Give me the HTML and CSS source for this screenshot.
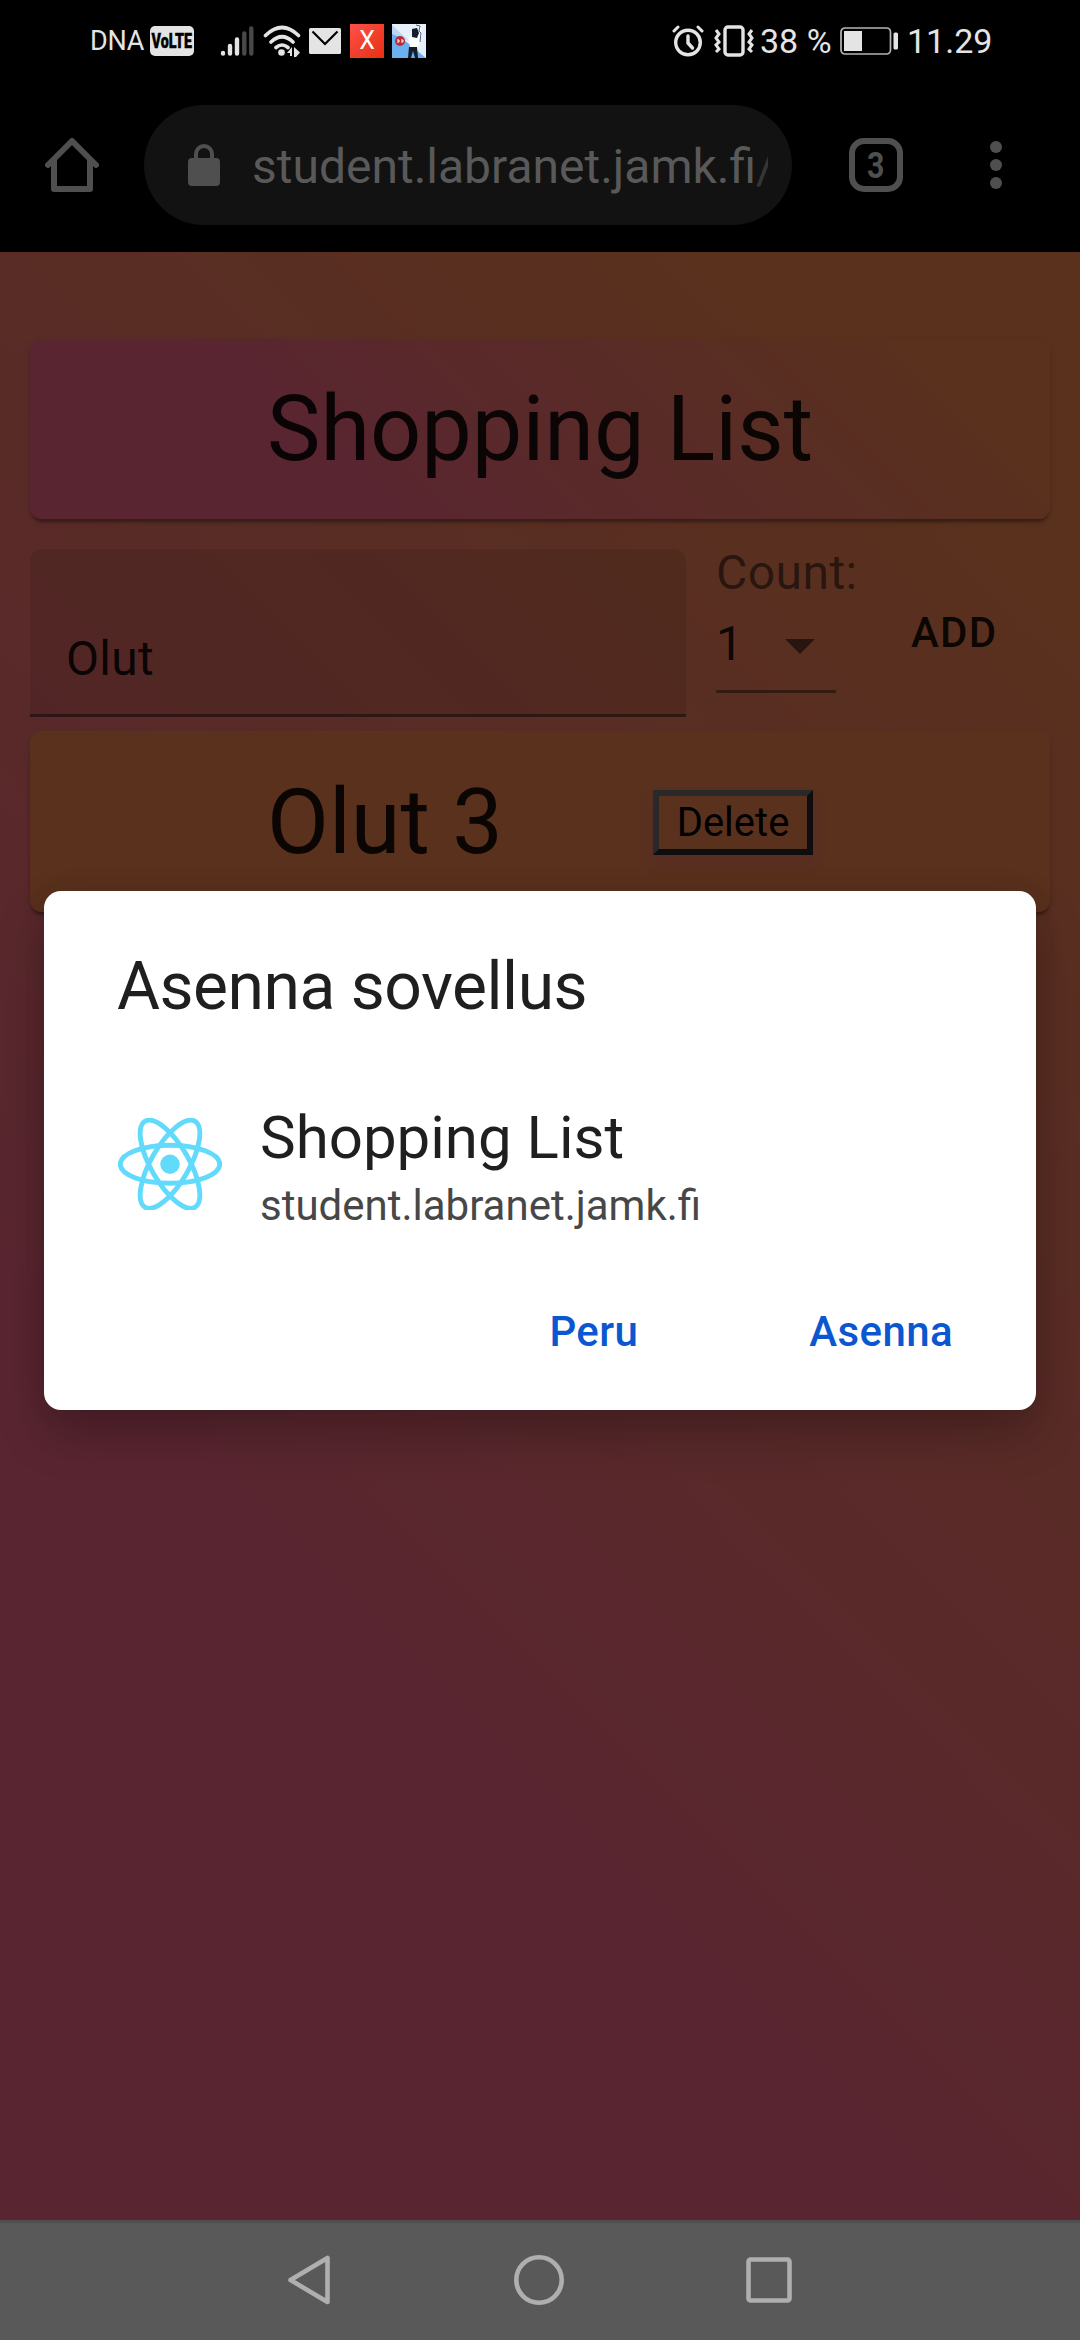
FILE: index.html
```html
<!DOCTYPE html>
<html lang="fi">
<head>
<meta charset="utf-8">
<title>Shopping List</title>
<link rel="stylesheet" href="styles.css">
</head>
<body>
<header class="status">
  <div class="status-left">
    <span class="carrier">DNA</span>
    <span class="volte"><span class="volte-text">VoLTE</span></span>
    <svg class="signal" width="34" height="32" viewBox="0 0 34 32"><g stroke="#e4e4e4" stroke-width="4.4" stroke-linecap="round"><path d="M3 28v.6M10 21v7.6M17 14.5v14.1"/><path stroke="#484848" d="M24.3 8.500v20.100M31.300 3.500v25.100"/></g></svg>
    <svg class="wifi" width="38" height="32" viewBox="0 0 38 32"><g fill="none" stroke="#e4e4e4" stroke-width="3.600" stroke-linecap="round"><path d="M2.500 10.500Q19-5.500 35.500 10.500M8 17Q19 6.500 30 17M13 22.500Q19 17.500 25 22.500"/></g><circle cx="18.500" cy="27.500" r="3.300" fill="#e4e4e4"/><path fill="#e4e4e4" d="M24 28l5-6v9h-2v-3zM31 22l6 5.500-4 4.500h-2z"/></svg>
    <svg class="mail" width="32" height="26" viewBox="0 0 32 26"><rect width="32" height="26" rx="1.500" fill="#e4e4e4"/><path d="M3.500 3.500L16 16 28.500 3.500" fill="none" stroke="#000" stroke-width="2.200"/></svg>
    <span class="app-x">X</span>
    <svg class="avatar" width="34" height="34" viewBox="0 0 34 34"><path fill="#e6f0fb" d="M0 0h34v34H0z"/><path fill="#6cb1ef" d="M0 6L34 34H0z"/><path fill="#b9d7f5" d="M0 1L17 17 0 10z"/><path fill="#fff" d="M17 13l8-3 4-7 1 9-4 12-8-1z"/><path fill="#151c2c" d="M20 5l5-1 2 5-2 5-5-1zM17 23h8l1 11h-3l-2-7-2 7h-3z"/><path fill="none" stroke="#566178" d="M24 1l4 1-1 5 2 2-1 9"/><circle cx="8" cy="17" r="5" fill="#bd2c35"/><path fill="none" stroke="#fff" d="M5 16h2v2H5M9 16h2v2H9"/></svg>
  </div>
  <div class="status-right">
    <svg width="32" height="32" viewBox="0 0 32 32" fill="none" stroke="#e4e4e4" stroke-linecap="round"><circle cx="16" cy="17.500" r="12.300" stroke-width="3.400"/><path stroke-width="3.400" d="M16 11v7l4.500 5"/><path stroke-width="3" d="M2 6l4-4M30 6l-4-4"/></svg>
    <svg class="vibrate" width="40" height="32" viewBox="0 0 40 32" fill="none" stroke="#e4e4e4" stroke-width="3.400"><rect x="11" y="2" width="18" height="28" rx="3"/><path stroke-width="3" d="M2 5l3 4-3 4 3 4-3 3 3 4-3 3M38 5l-3 4 3 4-3 4 3 3-3 4 3 3"/></svg>
    <span class="level">38 %</span>
    <svg class="battery" width="59" height="28" viewBox="0 0 59 28"><rect x="1" y="1" width="49.500" height="26" rx="4" fill="none" stroke="#b5b5b5" stroke-width="1.700"/><rect x="4" y="4" width="18" height="20" fill="#e4e4e4"/><rect x="53.500" y="5.500" width="4.500" height="17" rx="1.500" fill="#e4e4e4"/></svg>
    <span class="clock">11.29</span>
  </div>
</header>

<nav class="toolbar">
  <svg class="home" width="54" height="54" viewBox="0 0 54 54" fill="none" stroke="#4f4f4f" stroke-width="6" stroke-linecap="round" stroke-linejoin="round"><path d="M3 27L27 3l24 24"/><path d="M9 22v29h36V22"/></svg>
  <div class="omnibox">
    <svg width="32" height="42" viewBox="0 0 32 42"><rect y="14" width="32" height="28" rx="4" fill="#4f4f4f"/><path d="M8 16v-6a8 8 0 0 1 16 0v6" fill="none" stroke="#4f4f4f" stroke-width="4"/></svg>
    <span class="url">student.labranet.jamk.fi<span class="path">/</span></span>
  </div>
  <div class="tabs"><span class="tab-count">3</span></div>
  <svg class="more" width="12" height="48" viewBox="0 0 12 48" fill="#4f4f4f"><circle cx="6" cy="6" r="6"/><circle cx="6" cy="24" r="6"/><circle cx="6" cy="42" r="6"/></svg>
</nav>

<main class="page">
  <section class="paper title-card"><h1 class="heading">Shopping List</h1></section>
  <form class="entry">
    <div class="field">Olut</div>
    <div class="count">
      <label class="count-label">Count:</label>
      <div class="select"><span>1</span><svg width="30" height="15" viewBox="0 0 30 15"><path d="M0 0h30L15 15z" fill="#000" fill-opacity=".54"/></svg></div>
    </div>
    <button class="add" type="button">ADD</button>
  </form>
  <section class="paper item"><span class="heading">Olut 3</span><button class="delete" type="button">Delete</button></section>
  <div class="scrim">
    <div class="dialog">
      <h2 class="dialog-title">Asenna sovellus</h2>
      <div class="app">
        <svg width="104" height="92.500" viewBox="-11.500 -10.230 23 20.460"><circle r="2.150" fill="#61dafb"/><g fill="none" stroke="#61dafb" stroke-width="1.080"><ellipse rx="11" ry="4.200"/><ellipse rx="11" ry="4.200" transform="rotate(60)"/><ellipse rx="11" ry="4.200" transform="rotate(120)"/></g></svg>
        <div class="app-text"><span class="app-name">Shopping List</span><span class="app-origin">student.labranet.jamk.fi</span></div>
      </div>
      <div class="actions"><button class="action" type="button">Peru</button><button class="action" type="button">Asenna</button></div>
    </div>
  </div>
</main>

<footer class="navbar">
  <svg width="44" height="52" viewBox="0 0 44 52"><path d="M40.500 4v44L3.500 26z" fill="none" stroke="#afafaf" stroke-width="4.600" stroke-linejoin="round"/></svg>
  <svg width="50" height="50" viewBox="0 0 50 50"><circle cx="25" cy="25" r="22.700" fill="none" stroke="#afafaf" stroke-width="4.600"/></svg>
  <svg width="46" height="46" viewBox="0 0 46 46"><rect x="2.500" y="2.500" width="41" height="41" rx="2" fill="none" stroke="#afafaf" stroke-width="4.600"/></svg>
</footer>
</body>
</html>
```
FILE: styles.css
```css
* { box-sizing: border-box; }
body {
  margin: 0;
  width: 1080px;
  height: 2340px;
  display: flex;
  flex-direction: column;
  overflow: hidden;
  background: #000;
  font-family: Roboto, "Noto Sans", sans-serif;
}
svg { display: block; flex: none; }
button { border: 0; background: none; padding: 0; font-family: inherit; }

/* Status bar */
.status {
  height: 78px;
  display: flex;
  justify-content: space-between;
  padding: 4px 90px 0 90px;
  color: #e4e4e4;
}
.status-left, .status-right { display: flex; align-items: center; }
.status-right { padding-left: 1px; }
.carrier { width: 60px; font-size: 27px; letter-spacing: -0.2px; white-space: nowrap; }
.volte {
  width: 44px;
  height: 30px;
  display: flex;
  align-items: center;
  justify-content: center;
  border-radius: 5px;
  background: #e4e4e4;
  color: #000;
}
.volte-text { font-size: 21px; font-weight: 900; -webkit-text-stroke: .5px #000; transform: scaleX(.68); }
.signal { margin-left: 26px; }
.wifi { margin-left: 9px; }
.mail { margin-left: 8px; }
.app-x {
  width: 34px;
  height: 34px;
  margin-left: 9px;
  background: linear-gradient(135deg, #ff5147, #e62f14);
  color: #fff;
  font-size: 25px;
  line-height: 34px;
  text-align: center;
}
.avatar { margin-left: 8px; }
.vibrate { margin-left: 10px; }
.level { width: 80px; margin-left: 6px; font-size: 34px; white-space: nowrap; }
.clock { width: 83px; margin-left: 8px; font-size: 34px; white-space: nowrap; }

/* Browser toolbar */
.toolbar {
  height: 174px;
  display: flex;
  align-items: center;
  padding-left: 45px;
}
.omnibox {
  width: 648px;
  height: 120px;
  margin-left: 45px;
  padding: 0 24px 0 44px;
  display: flex;
  align-items: center;
  gap: 32px;
  border-radius: 60px;
  background: #121212;
}
.url {
  flex: 1;
  min-width: 0;
  padding-top: 3px;
  overflow: hidden;
  white-space: nowrap;
  color: #595959;
  font-size: 48px;
  line-height: 64px;
}
.path { color: #353535; }
.tabs {
  width: 54px;
  height: 54px;
  margin-left: 57px;
  display: flex;
  align-items: center;
  justify-content: center;
  border: 6px solid #4f4f4f;
  border-radius: 15px;
}
.tab-count { color: #4f4f4f; font-size: 37px; font-weight: 700; transform: scaleX(.82); }
.more { margin-left: 87px; }

/* Web page */
.page {
  position: relative;
  height: 1968px;
  padding: 87px 30px 0;
  background: linear-gradient(45deg, #fe6b8b 30%, #ff8e53 90%);
  color: rgba(0, 0, 0, .87);
}
.paper {
  height: 180px;
  display: flex;
  align-items: center;
  padding-left: 237px;
  border-radius: 12px;
  box-shadow: 0 6px 3px -3px rgba(0, 0, 0, .2), 0 3px 3px rgba(0, 0, 0, .14), 0 3px 9px rgba(0, 0, 0, .12);
}
.title-card { background: linear-gradient(45deg, #fe6b8b 30%, #ff8e53 90%); }
.item { height: 181px; padding-top: 2px; background: #ff8e53; }
.heading { width: 386px; margin: 0; font-size: 90px; font-weight: 400; line-height: 105px; white-space: nowrap; }
.entry { height: 212px; padding-top: 30px; display: flex; align-items: flex-start; }
.field {
  width: 656px;
  height: 168px;
  padding: 81px 36px 0;
  border-bottom: 3px solid rgba(0, 0, 0, .42);
  border-radius: 12px 12px 0 0;
  background: rgba(0, 0, 0, .09);
  font-size: 48px;
  letter-spacing: .3px;
  line-height: 57px;
}
.count { width: 150px; margin-left: 30px; font-size: 48px; letter-spacing: .45px; line-height: 57px; }
.count-label { display: block; height: 57px; margin-top: -5px; color: rgba(0, 0, 0, .54); }
.select {
  width: 120px;
  height: 92px;
  padding: 14px 21px 0 0;
  display: flex;
  justify-content: space-between;
  border-bottom: 3px solid rgba(0, 0, 0, .42);
}
.select svg { margin-top: 24px; }
.add { margin: 59px 0 0 45px; color: rgba(0, 0, 0, .87); font-size: 42px; font-weight: 500; letter-spacing: 1.2px; line-height: 50px; }
.delete {
  width: 160px;
  height: 65px;
  border: 6px solid;
  border-color: #757575 #282828 #282828 #757575;
  color: #000;
  font-size: 40px;
  line-height: 47px;
  box-shadow: 0 9px 15px 6px rgba(255, 105, 135, .3);
}

/* Install dialog over the dimmed page */
.scrim {
  position: absolute;
  inset: 0;
  padding: 639px 44px 0;
  background: rgba(0, 0, 0, .65);
}
.dialog {
  height: 519px;
  padding: 57px 83px 0 73px;
  border-radius: 17px;
  background: #fff;
  box-shadow: 0 24px 48px rgba(0, 0, 0, .24), 0 0 24px rgba(0, 0, 0, .06);
  color: #1f1f1f;
}
.dialog-title { margin: 0; font-size: 66px; font-weight: 400; letter-spacing: -.5px; line-height: 78px; white-space: nowrap; }
.app { margin-top: 76px; padding-left: 1px; display: flex; align-items: center; gap: 38px; height: 124px; }
.app-text { padding-top: 8px; display: flex; flex-direction: column; white-space: nowrap; }
.app-name { font-size: 60px; line-height: 70px; }
.app-origin { color: #474747; font-size: 42px; line-height: 54px; padding-top: 6px; }
.actions { display: flex; justify-content: flex-end; gap: 171px; margin-top: 81px; }
.action { color: #0b57d0; font-size: 42px; font-weight: 500; letter-spacing: .4px; line-height: 50px; }

/* System navigation */
.navbar {
  height: 120px;
  padding: 0 288px 3px 287px;
  display: flex;
  align-items: center;
  justify-content: space-between;
  border-top: 3px solid #4f4f4f;
  background: #595959;
}
```
